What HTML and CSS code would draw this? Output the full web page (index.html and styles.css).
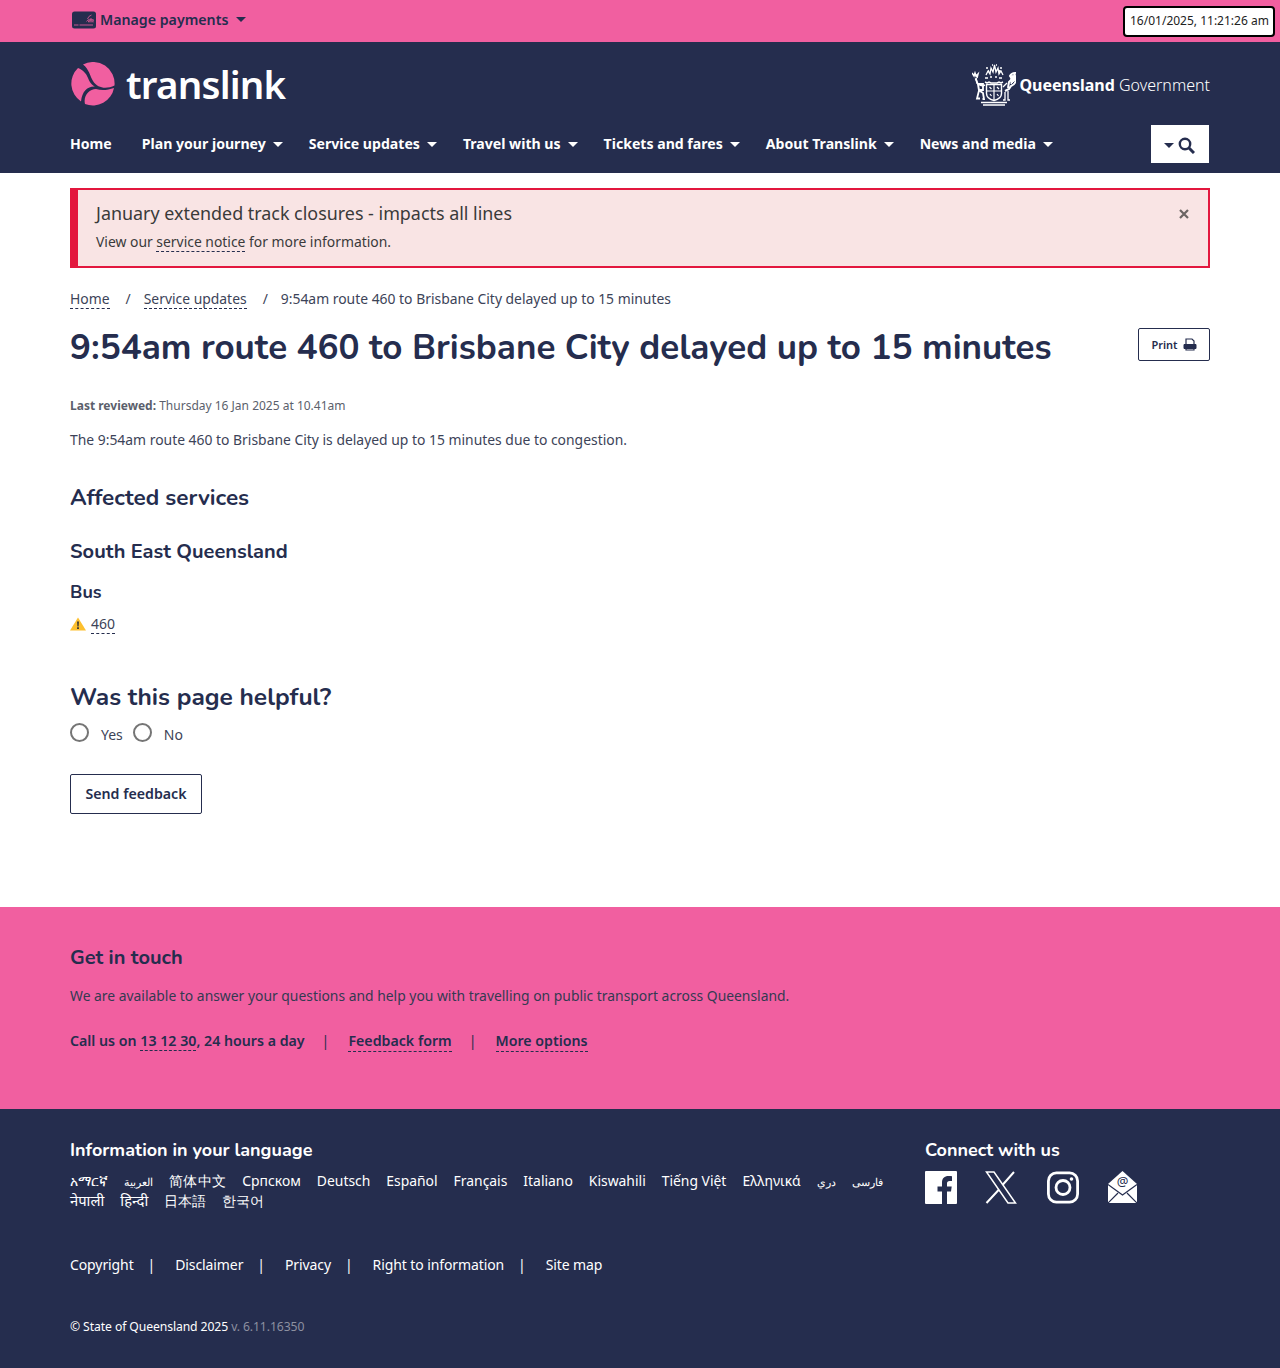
FILE: index.html
```html
<!DOCTYPE html>
<html lang="en">
<head>
<meta charset="utf-8">
<title>9:54am route 460 to Brisbane City delayed up to 15 minutes</title>
<link rel="stylesheet" href="styles.css">
</head>
<body>
<div class="clock">16/01/2025, 11:21:26 am</div>
<div class="topbar">
  <div class="wrap topbar-in">
    <svg class="card-icon" width="26" height="18" viewBox="0 0 26 18"><rect x="1" y="0.500" width="24" height="17" rx="2.500" fill="#252d4e"/><path d="M3 14h4.500M8.500 14H22" stroke="#c9558f" stroke-width="1.200"/><path d="M15.500 10.500a4.500 4.500 0 0 1 7 -1M17 11a3 3 0 0 1 4.500-.5M16.500 8a6 6 0 0 1 4-4M18 11.500V9M20 11.500V7M22 11.500V8" stroke="#e05a98" stroke-width=".8" fill="none"/></svg>
    <span class="manage">Manage payments</span><span class="caret caret-dark"></span>
  </div>
</div>
<header class="header">
  <div class="wrap">
    <div class="brand-row">
      <a class="logo" href="#">
        <svg width="44" height="44" viewBox="0 0 44 44" fill="#f15fa0"><path d="M12 2.500A21.500 21.500 0 0 1 43.500 23.500C36 27 27 27 22 19 19 14 18 7 12 2.500Z"/><path d="M7 6C12 8 15 11 17 16 19 21 21 23 24 24.500 17 24 11 29 10 39.500A21.500 21.500 0 0 1 7 6Z"/><path d="M14 42C12 34 18 27 25 27 31 29 37 28 43 26A21.500 21.500 0 0 1 14 42Z"/></svg>
        <span class="wordmark">translink</span>
      </a>
      <div class="gov">
        <svg width="44" height="42" viewBox="0 0 44 42" fill="none" stroke="#fff"><path d="M14 11l2-4 2 3 1-6 2 4 1.500-7 1.500 7 2-4 1 6 2-3 2 4M13 14h3M18 13h2M23 13h2M27 14h3M16 6l1 2M28 6l-1 2M14 4h2M28 4h2M20 1h1M24 1h1" stroke-width="1.300"/><path d="M13 18l2 1 2-1 2 1h6l2-1 2 1 2-1" stroke-width="1.500"/><path d="M14.500 20.500h15v9c0 4-3.500 6-7.500 7-4-1-7.500-3-7.500-7z" stroke-width="1.400"/><path d="M22 21v15M15 27h14M17.500 23l2 2M25 23l2 2M18 30l1.500 2M25 30l1.500 2" stroke-width="1.200"/><path d="M0 9l2 3 1-3 1 3 2-2-1 4M4 14l1 5 3 2c2 1 3 1 5 0" stroke-width="1.500"/><path d="M3.500 14.500l2.500 6 1 6-2 8h3M8 27l3 2 1 6h-1.500M6 20h5v6H7z" stroke-width="1.800"/><path d="M36 24l1-6 3-3-2-3c1-2 3-3 5-3-1 2 0 3 1 5 0 4-2 7-5 8l-2 3-4 2" stroke-width="2"/><path d="M39 12c2-1 3-1 4-1v5l-4 4z" fill="#fff" stroke-width="1"/><path d="M33 28v8h-2M36 27v9h2M31 23l4-4" stroke-width="1.300"/><path d="M9 38.500h26M11 41h22" stroke-width="1.300"/></svg>
        <span class="gov-text"><b>Queensland</b> Government</span>
      </div>
    </div>
    <nav class="nav">
      <a class="nav-item" href="#">Home</a>
      <a class="nav-item" href="#">Plan your journey<span class="caret"></span></a>
      <a class="nav-item" href="#">Service updates<span class="caret"></span></a>
      <a class="nav-item" href="#">Travel with us<span class="caret"></span></a>
      <a class="nav-item" href="#">Tickets and fares<span class="caret"></span></a>
      <a class="nav-item" href="#">About Translink<span class="caret"></span></a>
      <a class="nav-item" href="#">News and media<span class="caret"></span></a>
      <div class="search-btn"><span class="caret caret-dark caret-sm"></span><svg width="17" height="17" viewBox="0 0 17 17" fill="none" stroke="#252d4e"><circle cx="7" cy="7" r="5.200" stroke-width="2.400"/><path d="M11 11l5 5" stroke-width="3"/></svg></div>
    </nav>
  </div>
</header>
<main class="wrap main">
  <div class="alert">
    <div>
      <p class="alert-title">January extended track closures - impacts all lines</p>
      <p class="alert-text">View our <a href="#">service notice</a> for more information.</p>
    </div>
    <svg class="alert-close" width="10" height="10" viewBox="0 0 10 10"><path d="M1 1l8 8M9 1l-8 8" stroke="#6b6463" stroke-width="2.200"/></svg>
  </div>
  <ol class="crumbs">
    <li><a href="#">Home</a></li><li class="sep">/</li>
    <li><a href="#">Service updates</a></li><li class="sep">/</li>
    <li>9:54am route 460 to Brisbane City delayed up to 15 minutes</li>
  </ol>
  <div class="title-row">
    <h1>9:54am route 460 to Brisbane City delayed up to 15 minutes</h1>
    <button class="print">Print
      <svg width="14" height="13" viewBox="0 0 14 13" fill="none"><path d="M3 6V1h6l2 2v3M3 9v3h8V9" stroke="#252d4e" stroke-width="1.200"/><path d="M1 6.500h12v4H1z" fill="#252d4e" stroke="#252d4e"/></svg>
    </button>
  </div>
  <p class="reviewed"><b>Last reviewed:</b> Thursday 16 Jan 2025 at 10.41am</p>
  <p class="lead">The 9:54am route 460 to Brisbane City is delayed up to 15 minutes due to congestion.</p>
  <h2>Affected services</h2>
  <h3>South East Queensland</h3>
  <h4>Bus</h4>
  <p class="route">
    <svg width="16" height="14" viewBox="0 0 16 14"><path d="M8 .5L16 13.500H0z" fill="#fdc02f"/><path d="M7.100 4.500h1.800l-.3 5H7.400zM7.100 10.300h1.800v1.700H7.100z" fill="#333"/></svg>
    <a href="#">460</a>
  </p>
  <h2 class="helpful">Was this page helpful?</h2>
  <div class="radios">
    <span class="radio"></span><span class="radio-label">Yes</span>
    <span class="radio"></span><span class="radio-label">No</span>
  </div>
  <button class="send">Send feedback</button>
</main>
<section class="touch">
  <div class="wrap">
    <h2 class="touch-title">Get in touch</h2>
    <p class="touch-text">We are available to answer your questions and help you with travelling on public transport across Queensland.</p>
    <p class="touch-links">
      <span>Call us on <a href="#">13 12 30</a>, 24 hours a day</span><span class="bar">|</span>
      <a href="#">Feedback form</a><span class="bar">|</span>
      <a href="#">More options</a>
    </p>
  </div>
</section>
<footer class="footer">
  <div class="wrap">
    <div class="foot-cols">
      <div class="langs-col">
        <h2 class="foot-title">Information in your language</h2>
        <div class="langs">
          <a>አማርኛ</a><a class="ar">العربية</a><a class="zh">简体中文</a><a>Српском</a><a>Deutsch</a><a>Español</a><a>Français</a><a>Italiano</a><a>Kiswahili</a><a>Tiếng Việt</a><a>Ελληνικά</a><a class="ar">دري</a><a class="ar">فارسی</a><a class="hi">नेपाली</a><a class="hi">हिन्दी</a><a>日本語</a><a>한국어</a>
        </div>
      </div>
      <div class="connect">
        <h2 class="foot-title">Connect with us</h2>
        <div class="social">
          <svg width="32" height="33" viewBox="0 0 32 33"><rect width="32" height="33" rx="1" fill="#fff"/><path d="M22 33V20.500h4l.7-5H22v-3c0-1.500.7-2.500 2.600-2.500H27V5.200C26 5 25 5 23.500 5 19.500 5 17 7.300 17 11.500V15.500h-4.500v5H17V33z" fill="#252d4e"/></svg>
          <svg width="32" height="33" viewBox="0 0 32 33" fill="none" stroke="#fff"><path d="M1.500 1h7.500l21.500 31h-7.500z" stroke-width="1.500"/><path d="M29 1L17.500 14M14 18.500L1.500 32" stroke-width="2"/></svg>
          <svg class="ig" width="32" height="33" viewBox="0 0 32 33" fill="none" stroke="#fff" stroke-width="2.800"><rect x="1.400" y="1.900" width="29.200" height="29.200" rx="8"/><circle cx="16" cy="16.500" r="7"/><circle cx="24.500" cy="8" r="1.800" fill="#fff" stroke="none"/></svg>
          <svg class="mail" width="29" height="32" viewBox="0 0 29 32"><path d="M14.500 0L29 13v19H0V13z" fill="#fff"/><path d="M0 13.500l14.500 10.500L29 13.500M0 32l10-10M29 32L19 22" stroke="#252d4e" stroke-width="1.200" fill="none"/><text class="mail-at" x="14.500" y="14.500" text-anchor="middle">@</text></svg>
        </div>
      </div>
    </div>
    <div class="foot-links">
      <a>Copyright</a><span class="pipe">|</span><a>Disclaimer</a><span class="pipe">|</span><a>Privacy</a><span class="pipe">|</span><a>Right to information</a><span class="pipe">|</span><a>Site map</a>
    </div>
    <p class="copy">© State of Queensland 2025 <span class="ver">v. 6.11.16350</span></p>
  </div>
</footer>
</body>
</html>
```
FILE: styles.css
```css
* { box-sizing: border-box; }
html, body { margin: 0; padding: 0; }
body { font-family: "Noto Sans", "Open Sans", sans-serif; color: #252d4e; background: #fff; font-size: 14px; position: relative; }
a { color: inherit; text-decoration: none; }
p { margin: 0; }
.wrap { width: 1140px; margin: 0 auto; }
.clock { position: absolute; top: 6px; right: 5px; width: 152px; height: 31px; background: #fff; border: 2px solid #000; border-radius: 4px; color: #222; font-size: 12px; line-height: 25px; padding-left: 5px; white-space: nowrap; }
.topbar { height: 42px; background: #f15fa0; }
.topbar-in { display: flex; align-items: center; height: 39px; padding-left: 1px; }
.card-icon { margin-right: 3px; }
.manage { font-size: 14.200px; font-weight: 600; color: #252d4e; }
.caret { display: inline-block; width: 0; height: 0; border-left: 5.500px solid transparent; border-right: 5.500px solid transparent; border-top: 5.500px solid #fff; margin-left: 7px; vertical-align: 2px; }
.caret-dark { border-top-color: #252d4e; margin-left: 8px; }
.caret-sm { border-left-width: 5px; border-right-width: 5px; border-top-width: 5px; margin: 0 4px 0 0; vertical-align: 0; }
.header { background: #252d4e; height: 131px; color: #fff; }
.brand-row { display: flex; justify-content: space-between; align-items: center; height: 83px; padding-top: 1px; }
.logo { display: flex; align-items: center; gap: 11px; padding-left: 1px; }
.wordmark { font-family: "Noto Sans", sans-serif; font-size: 38.500px; font-weight: 600; letter-spacing: -.8px; line-height: 44px; color: #fff; }
.gov { display: flex; align-items: center; gap: 3px; margin-top: 2px; }
.gov-text { font-size: 16px; font-weight: 300; }
.gov-text b { font-weight: 700; }
.nav { display: flex; align-items: center; height: 38px; font-size: 14.100px; font-weight: 700; }
.nav-item { margin-right: 26px; padding-bottom: 2px; white-space: nowrap; }
.nav-item:first-child { margin-right: 30px; }
.search-btn { margin: 0 1px 0 auto; width: 58px; height: 38px; background: #fff; display: flex; align-items: center; justify-content: center; padding: 3px 1px 0 0; }
.alert { margin-top: 15px; height: 80px; border: 2px solid #e3173e; border-left-width: 8px; background: #f9e4e4; display: flex; justify-content: space-between; padding: 11px 19px 0 18px; color: #3a3a3a; }
.alert-title { font-size: 17.900px; line-height: 25px; font-weight: 400; }
.alert-text { font-size: 13.900px; line-height: 20px; margin-top: 6px; }
.alert-text a, .crumbs a, .route a { border-bottom: 1px dashed #252d4e; }
.alert-close { margin-top: 8px; }
.crumbs { list-style: none; display: flex; margin: 21px 0 0; padding: 0; font-size: 13.900px; line-height: 20px; color: #3c4358; }
.crumbs a { display: block; line-height: 19px; }
.sep { margin: 0 13px 0 16px; }
.title-row { display: flex; justify-content: space-between; align-items: flex-start; margin-top: 15px; }
h1 { margin: 0; font-size: 35px; line-height: 48px; font-weight: 700; font-family: "Nunito", "Noto Sans", sans-serif; white-space: nowrap; }
.print { margin-top: 4px; width: 72px; height: 33px; background: #fff; border: 1px solid #252d4e; border-radius: 2px; font: 600 11px "Noto Sans", sans-serif; color: #252d4e; display: flex; align-items: center; justify-content: center; gap: 5px; padding: 0; }
.reviewed { margin-top: 25px; font-size: 12px; line-height: 18px; color: #5b5f6c; }
.reviewed b { font-weight: 700; }
.lead { margin-top: 15px; font-size: 13.900px; line-height: 20px; color: #3c4358; }
h2, h3, h4 { font-family: "Nunito", "Lato", "Noto Sans", sans-serif; margin: 0; }
h2 { font-size: 22.500px; line-height: 30px; font-weight: 700; margin-top: 33px; }
h3 { font-size: 20px; line-height: 26px; font-weight: 700; margin-top: 26px; }
h4 { font-size: 18px; line-height: 24px; font-weight: 700; margin-top: 15px; }
.route { display: flex; align-items: center; gap: 5px; margin-top: 10px; font-size: 14px; line-height: 19px; color: #3c4358; }
h2.helpful { margin-top: 48px; font-size: 24.500px; }
.radios { display: flex; align-items: center; margin-top: 10px; height: 24px; }
.radio { width: 19px; height: 19px; border: 2px solid #757575; border-radius: 50%; background: #fff; margin-bottom: 4px; }
.radio-label { font-size: 14px; color: #3c4358; margin: 1px 10px 0 12px; }
.send { display: block; margin: 28px 0 93px; width: 132px; height: 40px; background: #fff; border: 1px solid #252d4e; border-radius: 2px; font: 600 14.200px "Noto Sans", sans-serif; color: #252d4e; padding: 0 0 2px; }
.touch { background: #f15fa0; height: 202px; padding-top: 37px; }
h2.touch-title { margin: 0; font-size: 20px; line-height: 28px; font-weight: 700; }
.touch-text { margin-top: 14px; font-size: 13.880px; line-height: 20px; color: #343a52; }
.touch-links { margin-top: 25px; font-size: 14.200px; line-height: 20px; font-weight: 600; display: flex; }
.touch-links a { border-bottom: 1px dashed #252d4e; }
.bar { margin: 0 19px 0 17px; font-weight: 400; }
.footer { background: #252d4e; color: #fff; height: 259px; padding-top: 27px; }
.foot-cols { display: flex; }
.langs-col { width: 855px; }
h2.foot-title { margin: 0; font-size: 18px; line-height: 28px; font-weight: 700; color: #fff; }
.langs { display: flex; flex-wrap: wrap; align-items: baseline; column-gap: 16px; margin-top: 7px; font-size: 13.900px; line-height: 19px; width: 830px; }
.langs .ar { font-size: 11px; }
.langs .zh { letter-spacing: .3px; }
.langs .hi { font-size: 14.800px; }
.connect { width: 285px; }
.social { display: flex; gap: 28px; align-items: flex-start; margin-top: 7px; }
.ig { margin-left: 2px; }
.mail { margin-left: 1px; }
.mail-at { font-size: 13px; fill: #252d4e; font-family: "Noto Sans", sans-serif; }
.foot-links { display: flex; margin-top: 45px; font-size: 14px; line-height: 20px; letter-spacing: -.1px; }
.pipe { margin: 0 20px 0 14px; }
.copy { margin-top: 43px; font-size: 12.200px; line-height: 18px; letter-spacing: -.1px; }
.ver { color: #8d90a0; }
```
